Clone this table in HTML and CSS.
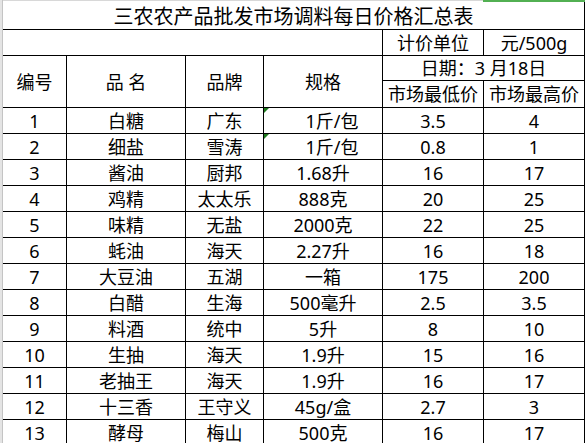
FILE: index.html
```html
<!DOCTYPE html>
<html lang="zh-CN">
<head>
<meta charset="utf-8">
<title>三农农产品批发市场调料每日价格汇总表</title>
<link rel="stylesheet" href="styles.css">
</head>
<body>
<div class="sheet">
  <div class="sel-mark"></div>
  <div class="grid">
    <div class="cell title">三农农产品批发市场调料每日价格汇总表</div>
    <div class="cell span4"></div>
    <div class="cell">计价单位</div>
    <div class="cell">元/500g</div>
    <div class="cell rs2">编号</div>
    <div class="cell rs2">品 名</div>
    <div class="cell rs2">品牌</div>
    <div class="cell rs2">规格</div>
    <div class="cell span2">日期：3 月18日</div>
    <div class="cell">市场最低价</div>
    <div class="cell">市场最高价</div>

    <div class="cell">1</div><div class="cell">白糖</div><div class="cell">广东</div><div class="cell flag indent">1斤/包</div><div class="cell">3.5</div><div class="cell">4</div>
    <div class="cell">2</div><div class="cell">细盐</div><div class="cell">雪涛</div><div class="cell flag indent">1斤/包</div><div class="cell">0.8</div><div class="cell">1</div>
    <div class="cell">3</div><div class="cell">酱油</div><div class="cell">厨邦</div><div class="cell">1.68升</div><div class="cell">16</div><div class="cell">17</div>
    <div class="cell">4</div><div class="cell">鸡精</div><div class="cell">太太乐</div><div class="cell">888克</div><div class="cell">20</div><div class="cell">25</div>
    <div class="cell">5</div><div class="cell">味精</div><div class="cell">无盐</div><div class="cell">2000克</div><div class="cell">22</div><div class="cell">25</div>
    <div class="cell">6</div><div class="cell">蚝油</div><div class="cell">海天</div><div class="cell">2.27升</div><div class="cell">16</div><div class="cell">18</div>
    <div class="cell">7</div><div class="cell">大豆油</div><div class="cell">五湖</div><div class="cell">一箱</div><div class="cell">175</div><div class="cell">200</div>
    <div class="cell">8</div><div class="cell">白醋</div><div class="cell">生海</div><div class="cell">500毫升</div><div class="cell">2.5</div><div class="cell">3.5</div>
    <div class="cell">9</div><div class="cell">料酒</div><div class="cell">统中</div><div class="cell">5升</div><div class="cell">8</div><div class="cell">10</div>
    <div class="cell">10</div><div class="cell">生抽</div><div class="cell">海天</div><div class="cell">1.9升</div><div class="cell">15</div><div class="cell">16</div>
    <div class="cell">11</div><div class="cell">老抽王</div><div class="cell">海天</div><div class="cell">1.9升</div><div class="cell">16</div><div class="cell">17</div>
    <div class="cell">12</div><div class="cell">十三香</div><div class="cell">王守义</div><div class="cell">45g/盒</div><div class="cell">2.7</div><div class="cell">3</div>
    <div class="cell">13</div><div class="cell">酵母</div><div class="cell">梅山</div><div class="cell">500克</div><div class="cell">16</div><div class="cell">17</div>
  </div>
</div>
</body>
</html>
```
FILE: styles.css
```css
html, body {
  margin: 0;
  padding: 0;
  background: #ffffff;
}
body {
  font-family: "Noto Sans", "Noto Sans CJK SC", sans-serif;
  color: #000000;
  overflow: hidden;
}
.sheet {
  position: relative;
  width: 583px;
  border-left: 2px solid #e4e4e4;
}
.sel-mark {
  position: absolute;
  top: 0;
  left: 481px;
  width: 102px;
  height: 2px;
  background: #52b052;
  z-index: 2;
}
.grid {
  display: grid;
  grid-template-columns: 64px 119px 78px 119px 101px 101px;
  grid-template-rows: 30px 26px 25px 27px repeat(13, 26px);
  border-left: 1px solid #c4c4c4;
  width: 582px;
}
.cell {
  box-sizing: border-box;
  border-right: 1px solid #000000;
  border-bottom: 1px solid #000000;
  display: flex;
  align-items: center;
  justify-content: center;
  font-size: 18px;
  line-height: 20px;
  white-space: nowrap;
  position: relative;
}
.title {
  grid-column: 1 / span 6;
  border-top: 1px solid #d8d8d8;
  font-size: 20px;
  padding-top: 3px;
}
.span4 { grid-column: span 4; }
.span2 { grid-column: span 2; }
.rs2 { grid-row: span 2; }
.indent { padding-left: 18px; }
.flag::before {
  content: "";
  position: absolute;
  left: 0;
  top: 0;
  width: 0;
  height: 0;
  border-top: 5px solid #1e7b1e;
  border-right: 5px solid transparent;
}
```
